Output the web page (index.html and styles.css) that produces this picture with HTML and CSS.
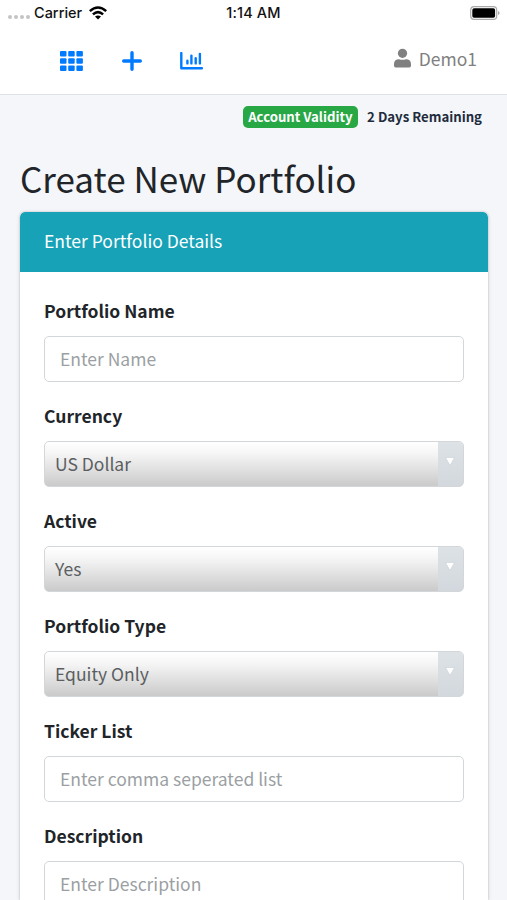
FILE: index.html
```html
<!DOCTYPE html>
<html lang="en">
<head>
<meta charset="utf-8">
<title>Create New Portfolio</title>
<link rel="stylesheet" href="styles.css">
</head>
<body>
<header class="top">
  <div class="status">
    <div class="carrier">
      <span class="dots"><i></i><i></i><i></i><i></i></span>
      <span class="carrier-name">Carrier</span>
      <svg class="wifi" viewBox="0 0 18 14"><g fill="none" stroke="#000" stroke-width="2.5"><path d="M.8 5.2Q9-2.3 17.2 5.2"/><path d="M3.9 8.4Q9 3.9 14.1 8.4"/></g><path d="M6 10.6Q9 8.2 12 10.6L9 13.6z"/></svg>
    </div>
    <span class="time">1:14 AM</span>
    <svg class="battery" viewBox="0 0 30 14"><rect x=".7" y=".7" width="26" height="12.6" rx="3.4" fill="#fff" stroke="#aaa" stroke-width="1.2"/><rect x="2.3" y="2.2" width="22.8" height="9.6" rx="1.8"/><path d="M28.2 5v4Q29.5 8.500 29.500 7T28.200 5z" fill="#999"/></svg>
  </div>
  <nav class="nav">
    <svg class="icon grid" viewBox="0 0 23 20"><g fill="#007bff"><rect width="6.500" height="5.600" rx="1"/><rect x="8.200" width="6.500" height="5.600" rx="1"/><rect x="16.400" width="6.500" height="5.600" rx="1"/><rect y="7.200" width="6.500" height="5.600" rx="1"/><rect x="8.200" y="7.200" width="6.500" height="5.600" rx="1"/><rect x="16.400" y="7.200" width="6.500" height="5.600" rx="1"/><rect y="14.400" width="6.500" height="5.600" rx="1"/><rect x="8.200" y="14.400" width="6.500" height="5.600" rx="1"/><rect x="16.400" y="14.400" width="6.500" height="5.600" rx="1"/></g></svg>
    <svg class="icon plus" viewBox="0 0 20 20"><path d="M10 1.700v16.600M1.700 10h16.600" stroke="#007bff" stroke-width="3.400" stroke-linecap="round"/></svg>
    <svg class="icon chart" viewBox="0 0 23 18"><path d="M1.300 1v15.300H22" fill="none" stroke="#007bff" stroke-width="2.400" stroke-linecap="round" stroke-linejoin="round"/><path d="M7.400 8.800v2.600M11.400 3.600v7.800M15.700 6.200v5.200M19.900 2v9.400" stroke="#007bff" stroke-width="2.400" stroke-linecap="round"/></svg>
    <div class="user">
      <svg viewBox="0 0 18 20"><g fill="#808080"><circle cx="9" cy="5" r="4.900"/><path d="M0 16.500Q0 11.200 5.300 11.200Q9 12.600 12.700 11.200Q18 11.200 18 16.500V18.200Q18 20 16.200 20H1.800Q0 20 0 18.200z"/></g></svg>
      <span>Demo1</span>
    </div>
  </nav>
</header>
<main>
  <div class="validity"><span class="badge">Account Validity</span><span class="remain">2 Days Remaining</span></div>
  <h1><span>Create New Portfolio</span></h1>
  <section class="card">
    <div class="card-header">Enter Portfolio Details</div>
    <form class="card-body">
      <div class="field"><label>Portfolio Name</label><input class="control" type="text" placeholder="Enter Name"></div>
      <div class="field"><label>Currency</label><div class="select"><span>US Dollar</span><b class="arrow"><svg viewBox="0 0 10 9"><path d="M.5 .5h9L5 8.500z"/></svg></b></div></div>
      <div class="field"><label>Active</label><div class="select"><span>Yes</span><b class="arrow"><svg viewBox="0 0 10 9"><path d="M.5 .5h9L5 8.500z"/></svg></b></div></div>
      <div class="field"><label>Portfolio Type</label><div class="select"><span>Equity Only</span><b class="arrow"><svg viewBox="0 0 10 9"><path d="M.5 .5h9L5 8.500z"/></svg></b></div></div>
      <div class="field"><label>Ticker List</label><input class="control" type="text" placeholder="Enter comma seperated list"></div>
      <div class="field"><label>Description</label><input class="control" type="text" placeholder="Enter Description"></div>
    </form>
  </section>
</main>
</body>
</html>
```
FILE: styles.css
```css
* { box-sizing: border-box; }
html, body { height: 900px; overflow: hidden; }
body {
  margin: 0;
  background: #f4f6f9;
  color: #212529;
  font-family: "Noto Sans CJK SC", "Noto Sans", sans-serif;
  font-size: 17.5px;
  line-height: 29px;
}
svg { display: block; }
.top { height: 95px; background: #fff; border-bottom: 1px solid #dee2e6; }
.status {
  height: 26px;
  display: grid;
  grid-template-columns: 1fr auto 1fr;
  align-items: center;
  padding: 0 7px 0 8px;
  font: 500 14.500px/26px Inter, sans-serif;
  color: #111;
}
.time { margin-right: 1px; letter-spacing: .15px; }
.carrier { display: flex; align-items: center; }
.dots { display: flex; gap: 2px; margin: 8px 4px 0 0; }
.dots i { width: 4px; height: 4px; border-radius: 50%; background: #c4c4c4; }
.wifi { width: 18px; height: 14px; margin-left: 7px; }
.battery { width: 30px; height: 14px; justify-self: end; }
.nav { height: 70px; display: flex; align-items: center; padding: 0 30px 0 60px; }
.grid { width: 23px; height: 20px; }
.plus { width: 20px; height: 20px; margin-left: 39px; }
.chart { width: 23px; height: 18px; margin-left: 38px; }
.user { margin: 0 0 5px auto; display: flex; align-items: center; gap: 8px; color: #808080; }
.user svg { width: 17px; height: 20px; margin-bottom: 1px; }
main { padding: 0 19px 0 20px; }
.validity {
  height: 43px;
  display: flex;
  align-items: center;
  justify-content: flex-end;
  gap: 9px;
  padding-right: 6px;
  font-size: 13.200px;
  font-weight: 700;
  color: #212b3c;
}
.badge { height: 22px; line-height: 22px; padding: 0 5.500px; border-radius: 5px; background: #28a745; color: #fff; }
h1 { margin: 0; height: 74px; padding-top: 14px; font-size: 35px; line-height: 52px; font-weight: 400; white-space: nowrap; }
.card { height: 688px; overflow: hidden; background: #fff; border-radius: 5px 5px 0 0; box-shadow: 0 0 2px rgba(0,0,0,.2), 0 1px 4px rgba(0,0,0,.15); }
.card-header { height: 60px; line-height: 57px; padding: 0 24px; background: #17a2b8; color: #fff; border-radius: 5px 5px 0 0; }
.card-body { padding: 24px 24.500px 0 24px; }
.field { height: 105px; }
label { display: block; height: 40px; line-height: 29px; font-weight: 700; }
.control, .select {
  width: 100%;
  height: 46px;
  border: 1px solid #d3d7da;
  border-radius: 5px;
  font: inherit;
}
.control { display: block; padding: 0 15px 2px; background: #fff; }
.control::placeholder { color: #9b9fa3; opacity: 1; }
.select {
  display: flex;
  overflow: hidden;
  padding-left: 10px;
  line-height: 44px;
  color: #5b5e61;
  background: linear-gradient(#fff 0%, #f6f6f6 25%, #e2e2e2 60%, #cacaca 100%);
}
.arrow { width: 25px; margin-left: auto; padding: 15px 0 0 7px; background: linear-gradient(#dde2e6, #d2d8dd); }
.arrow svg { width: 10px; height: 9px; fill: #fff; stroke: #c3c9ce; stroke-width: .5; }
```
